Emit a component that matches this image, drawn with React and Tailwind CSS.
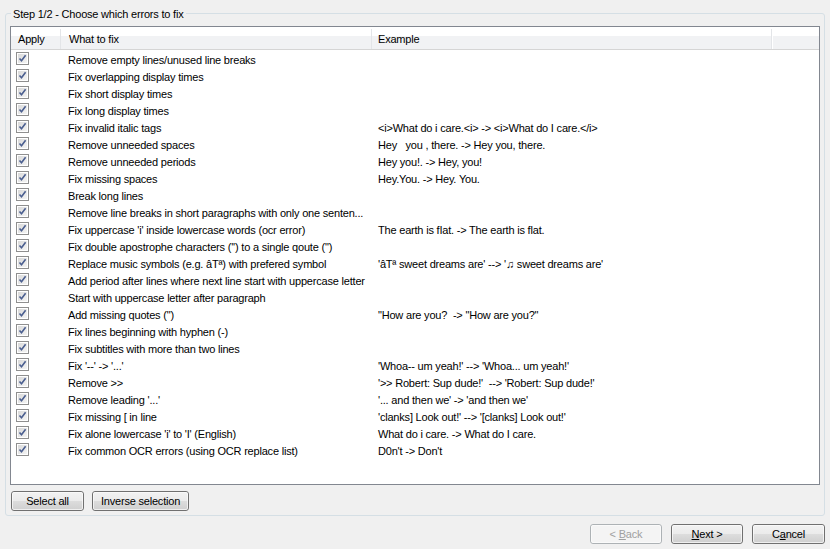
const rows = [
  ['Remove empty lines/unused line breaks', ''],
  ['Fix overlapping display times', ''],
  ['Fix short display times', ''],
  ['Fix long display times', ''],
  ['Fix invalid italic tags', '<i>What do i care.<i> -> <i>What do I care.</i>'],
  ['Remove unneeded spaces', 'Hey   you , there. -> Hey you, there.'],
  ['Remove unneeded periods', 'Hey you!. -> Hey, you!'],
  ['Fix missing spaces', 'Hey.You. -> Hey. You.'],
  ['Break long lines', ''],
  ['Remove line breaks in short paragraphs with only one senten...', ''],
  ["Fix uppercase 'i' inside lowercase words (ocr error)", 'The earth is fIat. -> The earth is flat.'],
  ["Fix double apostrophe characters ('') to a single qoute (\")", ''],
  ['Replace music symbols (e.g. âTª) with prefered symbol', "'âTª sweet dreams are' --> '♫ sweet dreams are'"],
  ['Add period after lines where next line start with uppercase letter', ''],
  ['Start with uppercase letter after paragraph', ''],
  ['Add missing quotes (")', '"How are you?  -> "How are you?"'],
  ['Fix lines beginning with hyphen (-)', ''],
  ['Fix subtitles with more than two lines', ''],
  ["Fix '--' -> '...'", "'Whoa-- um yeah!' --> 'Whoa... um yeah!'"],
  ['Remove >>', "'>> Robert: Sup dude!'  --> 'Robert: Sup dude!'"],
  ["Remove leading '...'", "'... and then we' -> 'and then we'"],
  ['Fix missing [ in line', "'clanks] Look out!' --> '[clanks] Look out!'"],
  ["Fix alone lowercase 'i' to 'I' (English)", 'What do i care. -> What do I care.'],
  ['Fix common OCR errors (using OCR replace list)', "D0n't -> Don't"],
];

function CheckBox() {
  return (
    <div className="flex h-[13px] w-[13px] items-center justify-center border border-[#8f8f8f] bg-white p-px">
      <div className="flex h-full w-full items-center justify-center bg-[linear-gradient(135deg,#d9d9d9,#f4f4f4)]">
        <svg viewBox="0 0 9 9" className="h-[9px] w-[9px]">
          <path d="M1.5 4.5 L3.5 6.8 L7.6 1.2" fill="none" stroke="#4a5e8f" strokeWidth="1.6" />
        </svg>
      </div>
    </div>
  );
}

function WinButton({ children, disabled, className = '' }) {
  return (
    <div
      className={
        'flex h-[20px] items-center justify-center rounded-[3px] border ' +
        (disabled
          ? 'border-[#adb2b5] bg-[#f4f4f4] text-[#a0a0a0] '
          : 'border-[#707070] bg-[linear-gradient(#f2f2f2_0,#ebebeb_50%,#dddddd_50%,#cfcfcf_100%)] text-black ') +
        className
      }
    >
      <div className="flex h-full w-full items-center justify-center rounded-[2px] border border-[#fcfcfc]/70">
        {children}
      </div>
    </div>
  );
}

export default function App() {
  return (
    <div className="relative h-[549px] w-[830px] overflow-hidden bg-[#f0f0f0] font-['Liberation_Sans',Arial,sans-serif] text-[11px] tracking-[-0.2px] text-black">
      <div className="relative mx-[5px] mt-[13px] flex h-[503px] flex-col rounded-[3px] border border-[#d5dfe5] px-[4px] pt-[12px]">
        <span className="absolute left-[5px] top-[-7px] bg-[#f0f0f0] px-[2px] leading-[14px]">
          Step 1/2 - Choose which errors to fix
        </span>

        <div className="h-[459px] w-[810px] border border-[#828790] bg-white">
          <div className="flex h-[23px] border-b border-[#d5d5d5] bg-[linear-gradient(#ffffff_0,#ffffff_40%,#f1f2f4_40%,#f1f2f4_100%)] pt-[2px]">
            <div className="flex w-[50px] items-center border-r border-[#e3e5e8] pl-[7px]">Apply</div>
            <div className="flex w-[311px] items-center border-r border-[#e3e5e8] pl-[8px]">What to fix</div>
            <div className="flex w-[400px] items-center border-r border-[#e3e5e8] pl-[6px]">Example</div>
            <div className="flex-1 border-l border-white" />
          </div>
          <div className="flex flex-col">
            {rows.map(([what, ex], i) => (
              <div key={i} className="flex h-[17px] items-start">
                <div className="w-[50px] pl-[5px] pt-[2px]">
                  <CheckBox />
                </div>
                <div className="w-[311px] truncate whitespace-pre pl-[7px] pt-[3px] leading-[14px]">{what}</div>
                <div className="w-[400px] whitespace-pre pl-[6px] pt-[3px] leading-[14px]">{ex}</div>
              </div>
            ))}
          </div>
        </div>

        <div className="mt-[6px] flex gap-[8px] pl-[1px]">
          <WinButton className="w-[73px]">Select all</WinButton>
          <WinButton className="w-[97px]">Inverse selection</WinButton>
        </div>
      </div>

      <div className="mt-[8px] flex justify-end gap-[9px] pr-[5px]">
        <WinButton disabled className="w-[72px]">
          <span>&lt; <u>B</u>ack</span>
        </WinButton>
        <WinButton className="w-[72px]">
          <span><u>N</u>ext &gt;</span>
        </WinButton>
        <WinButton className="w-[73px]">
          <span>C<u>a</u>ncel</span>
        </WinButton>
      </div>
    </div>
  );
}
